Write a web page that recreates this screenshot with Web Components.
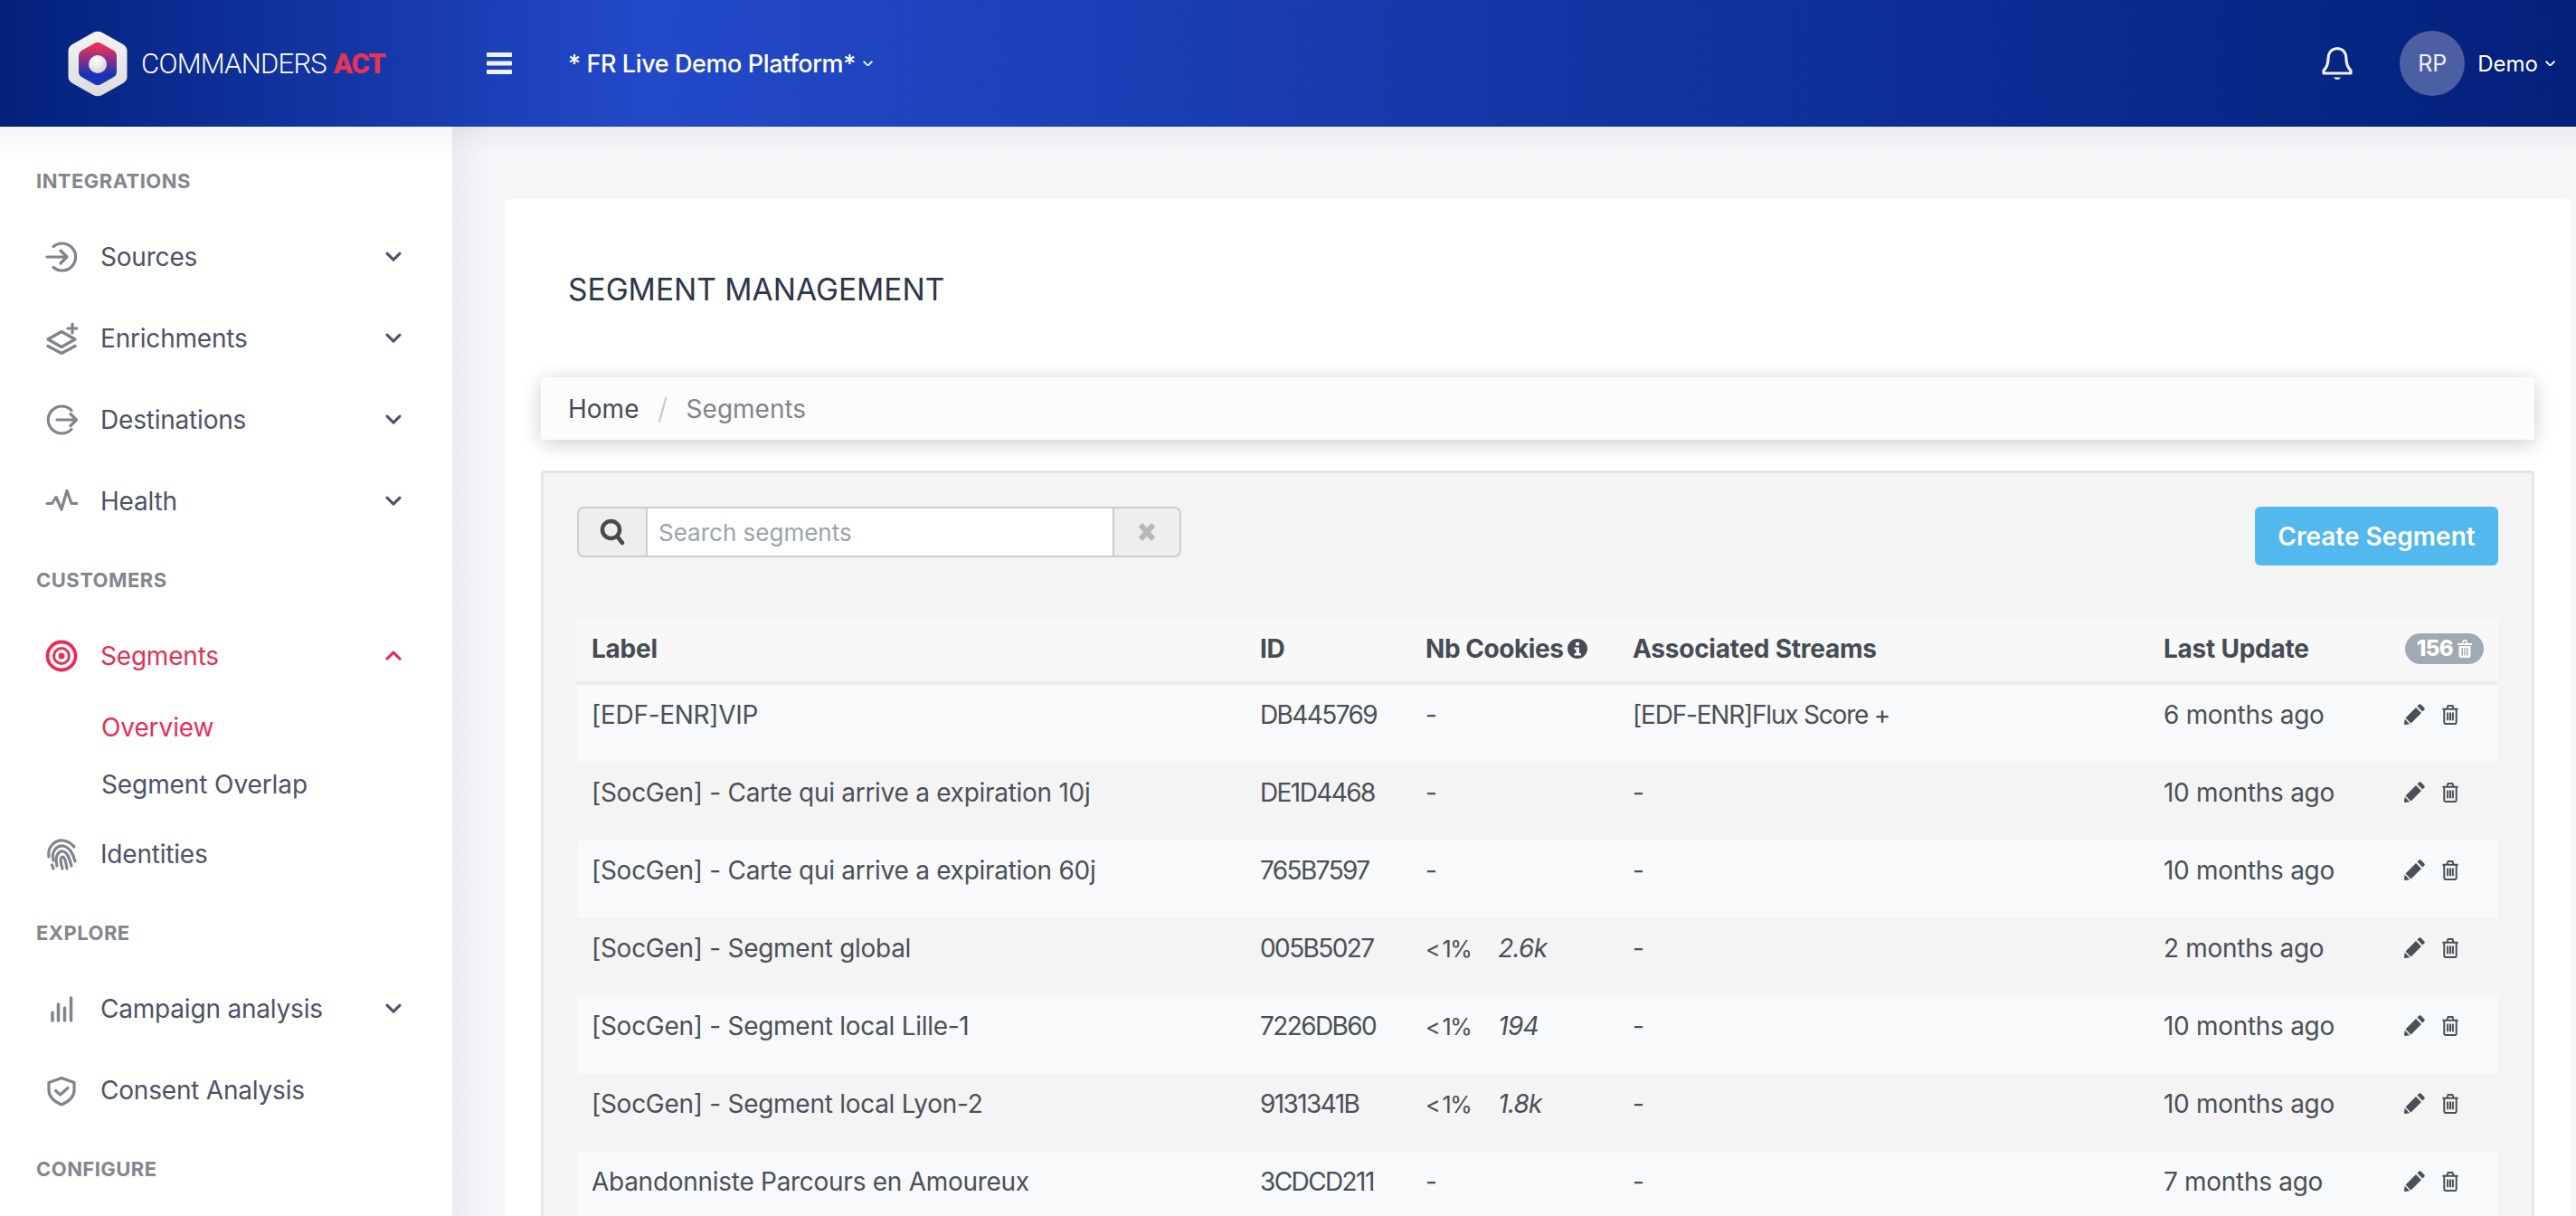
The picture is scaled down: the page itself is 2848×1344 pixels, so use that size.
<!DOCTYPE html>
<html lang="en"><head><meta charset="utf-8"><title>Segment Management</title>
<style>
html,body{margin:0;padding:0;height:1344px;width:2848px;overflow:hidden;background:#f7f7fa;font-family:Inter,"Noto Sans",sans-serif;color:#4a5058}
</style></head><body>
<app-shell>
  <top-bar slot="top" platform="* FR Live Demo Platform*" user="Demo" initials="RP"></top-bar>
  <side-nav slot="side">
    <nav-section>INTEGRATIONS</nav-section>
    <nav-item icon="sources" chevron="down">Sources</nav-item>
    <nav-item icon="enrich" chevron="down">Enrichments</nav-item>
    <nav-item icon="dest" chevron="down">Destinations</nav-item>
    <nav-item icon="health" chevron="down">Health</nav-item>
    <nav-section>CUSTOMERS</nav-section>
    <nav-item icon="target" chevron="up" active>Segments</nav-item>
    <nav-sub active>Overview</nav-sub>
    <nav-sub>Segment Overlap</nav-sub>
    <nav-item icon="finger">Identities</nav-item>
    <nav-section>EXPLORE</nav-section>
    <nav-item icon="bars" chevron="down">Campaign analysis</nav-item>
    <nav-item icon="shield">Consent Analysis</nav-item>
    <nav-section>CONFIGURE</nav-section>
  </side-nav>
  <page-card title-text="SEGMENT MANAGEMENT">
    <bread-crumb slot="crumb" current="Segments">Home</bread-crumb>
    <seg-panel>
      <seg-toolbar placeholder="Search segments" action="Create Segment"></seg-toolbar>
      <seg-head count="156"></seg-head>
      <seg-row label="[EDF-ENR]VIP" uid="DB445769" stream="[EDF-ENR]Flux Score +" updated="6 months ago" striped></seg-row>
      <seg-row label="[SocGen] - Carte qui arrive a expiration 10j" uid="DE1D4468" updated="10 months ago"></seg-row>
      <seg-row label="[SocGen] - Carte qui arrive a expiration 60j" uid="765B7597" updated="10 months ago" striped></seg-row>
      <seg-row label="[SocGen] - Segment global" uid="005B5027" pct="&lt; 1%" cookies="2.6k" updated="2 months ago"></seg-row>
      <seg-row label="[SocGen] - Segment local Lille-1" uid="7226DB60" pct="&lt; 1%" cookies="194" updated="10 months ago" striped></seg-row>
      <seg-row label="[SocGen] - Segment local Lyon-2" uid="9131341B" pct="&lt; 1%" cookies="1.8k" updated="10 months ago"></seg-row>
      <seg-row label="Abandonniste Parcours en Amoureux" uid="3CDCD211" updated="7 months ago" striped></seg-row>
    </seg-panel>
  </page-card>
</app-shell>
<script>
const ICONS={
 sources:'<path d="M9 6.5A15 15 0 1 1 9 29.5"/><path d="M2 18H24M17 11l7 7-7 7"/>',
 dest:'<path d="M29 7.5A15 15 0 1 0 29 28.5"/><path d="M13 18H34M28 11.5l6.5 6.500-6.500 6.500"/>',
 enrich:'<path d="M18 10.500L33 19 18 27.500 3 19Z"/><path d="M3 26.500L18 34.500 33 26.500"/><path d="M30 2v10M25 7h10"/>',
 health:'<path d="M2 20.500H7.500L12 13.500 18 27 24 6.500 29 20.500H35"/>',
 target:'<circle cx="18" cy="18" r="15.500" stroke-width="3.800"/><circle cx="18" cy="18" r="8.500" stroke-width="3"/><circle cx="18" cy="18" r="3.500" fill="currentColor" stroke="none"/>',
 finger:'<path d="M4 21C2 10 11 2 20 3 25 4 29 6 32 10"/><path d="M9 25C6 14 14 8 20 9 26 10 31 17 33 26"/><path d="M13 31C10 20 15 14 20 15 25 16 27 24 29 31"/><path d="M19 34C17 28 16 22 19 21 22 21 23 28 24 34"/><path d="M9 34L7.500 30"/>',
 bars:'<path stroke-width="3.500" d="M8 31V22M14.500 31V13M21.500 31V17M28.500 31V6"/>',
 shield:'<path d="M18 4.500L32 9.500V18C32 26 26 30.500 18 34 10 30.500 4 26 4 18V9.500Z"/><path d="M11.500 18.500l5 4.500 8.500-7.500"/>'
};
function def(name,css,html){
 customElements.define(name,class extends HTMLElement{
  connectedCallback(){
   if(this.shadowRoot)return;
   const r=this.attachShadow({mode:'open'});
   r.innerHTML='<style>'+css+'</style>'+(typeof html==='function'?html(this):html);
  }
 });
}
const chev=(dir,c,w)=>`<svg width="${w||18}" height="${(w||18)*.62}" viewBox="0 0 18 11" fill="none" stroke="${c}" stroke-width="3" stroke-linecap="round" stroke-linejoin="round"><path d="${dir==='up'?'M2 9l7-7 7 7':'M2 2l7 7 7-7'}"/></svg>`;
def('app-shell',`:host{display:grid;grid-template-columns:500px 1fr;grid-template-rows:140px 1fr;height:1344px;width:2848px;overflow:hidden}
 .top{grid-column:1/3;position:relative;z-index:3}
 .side{position:relative;z-index:2;overflow:hidden}
 .main{padding:80px 6px 0 58px;background:linear-gradient(90deg,rgba(30,30,70,.055),rgba(30,30,70,0) 45px),linear-gradient(rgba(30,30,70,.055),rgba(30,30,70,0) 30px),#f7f7fa;overflow:hidden}`,
 `<div class="top"><slot name="top"></slot></div><div class="side"><slot name="side"></slot></div><div class="main"><slot></slot></div>`);
def('top-bar',`:host{display:flex;align-items:center;height:140px;background:linear-gradient(90deg,#03207a 0,#2249c9 25%,#03207a 100%);color:#fff}
 .logo{display:flex;align-items:center;margin-left:75px;width:463px}
 .word{font:300 31px Roboto,sans-serif;margin-left:15px;letter-spacing:-.75px;white-space:nowrap}
 .word b{font-weight:900;color:#e83256;letter-spacing:-1.1px;margin-left:1px}
 .plat{display:flex;align-items:center;gap:8px;margin-left:62px;font-size:27px;font-weight:500;white-space:nowrap;letter-spacing:-.4px}
 .sp{flex:1}.bell{margin-right:52px;display:flex}
 .av{width:72px;height:72px;border-radius:50%;background:#4d5fa3;display:flex;align-items:center;justify-content:center;font-size:25px;color:#eef}
 .user{margin:0 23px 0 14px;display:flex;align-items:center;gap:8px;font-size:24px;}`,
 t=>`<div class="logo"><svg width="66" height="73" viewBox="0 0 66 73" style="flex:none">
 <defs><linearGradient id="g1" x1="0" y1="0" x2="0" y2="1"><stop offset="0" stop-color="#f4f4f4"/><stop offset="1" stop-color="#dcdcdc"/></linearGradient>
 <linearGradient id="g2" x1="0" y1="0" x2="0" y2="1"><stop offset=".1" stop-color="#e8305a"/><stop offset=".75" stop-color="#1a32b8"/></linearGradient>
 <radialGradient id="g3" cx=".4" cy=".3" r=".8"><stop offset="0" stop-color="#fff"/><stop offset="1" stop-color="#cfcfcf"/></radialGradient></defs>
 <path d="M28 2Q33-.5 38 2L61 15Q65.500 18 65.500 22V51Q65.500 55 61 58L38 71Q33 73.500 28 71L5 58Q.5 55 .5 51V22Q.5 18 5 15Z" fill="url(#g1)"/>
 <path d="M30 13.500Q33 12 36 13.500L51 22Q54 24 54 27V46Q54 49 51 51L36 59.500Q33 61 30 59.500L15 51Q12 49 12 46V27Q12 24 15 22Z" fill="url(#g2)"/>
 <circle cx="33" cy="37" r="10" fill="url(#g3)"/></svg>
 <span class="word">COMMANDERS <b>ACT</b></span></div>
 <svg width="28" height="24" viewBox="0 0 28 24" fill="#eef1fb" style="flex:none"><rect width="28" height="5" rx="1"/><rect y="9.500" width="28" height="5" rx="1"/><rect y="19" width="28" height="5" rx="1"/></svg>
 <div class="plat"><span>${t.getAttribute('platform')}</span>${chev('down','#eef1fb',11)}</div>
 <div class="sp"></div>
 <div class="bell"><svg width="34" height="38" viewBox="0 0 34 38" fill="none" stroke="#eef1fb" stroke-width="3.200" stroke-linejoin="round"><path d="M17 2.500C10 3 7 8 7 14C7 21 5 24 2 27V30H32V27C29 24 27 21 27 14C27 8 24 3 17 2.500Z"/><path d="M13 34.500H21Q19.500 37 17 37T13 34.500Z" fill="#eef1fb" stroke="none"/></svg></div>
 <div class="av">${t.getAttribute('initials')}</div>
 <div class="user"><span>${t.getAttribute('user')}</span>${chev('down','#fff',11)}</div>`);
def('side-nav',`:host{display:block;height:1204px;background:linear-gradient(#f4f6f6,#fff 36px);padding-top:38px;box-sizing:border-box}`,`<slot></slot>`);
def('nav-section',`:host{display:block;height:44px;line-height:44px;padding-left:40px;margin:20px 0 17px;font-size:22px;font-weight:700;color:#82878f;letter-spacing:.45px}:host(:first-child){margin-top:0}`,`<slot></slot>`);
def('nav-item',`:host{display:flex;align-items:center;height:90px;padding-left:50px;font-size:28px;color:#4c5368;letter-spacing:-.2px}
 :host([active]){color:#e72f55}
 svg.i{width:36px;height:36px;flex:none;color:#7f848d;margin-right:25px}
 :host([active]) svg.i{color:#e72f55}
 .t{flex:1;white-space:nowrap}.c{margin-right:56px;display:flex}`,
 t=>`<svg class="i" viewBox="0 0 36 36" fill="none" stroke="currentColor" stroke-width="3.200" stroke-linecap="round" stroke-linejoin="round">${ICONS[t.getAttribute('icon')]}</svg><span class="t"><slot></slot></span>${t.hasAttribute('chevron')?`<span class="c">${chev(t.getAttribute('chevron'),t.hasAttribute('active')?'#e72f55':'#4c5368')}</span>`:''}`);
def('nav-sub',`:host{display:flex;align-items:center;height:63.500px;padding-left:112px;font-size:28px;color:#4c5368;white-space:nowrap;letter-spacing:-.1px}
 :host([active]){color:#e72f55;margin-top:2px}`,`<slot></slot>`);
def('page-card',`:host{display:block;background:#fff;height:1200px;padding:73px 40px 0;box-sizing:border-box;border-radius:6px 6px 0 0}
 h1{margin:0 0 70px 30px;font-size:33.500px;line-height:54px;font-weight:400;color:#2d3748;white-space:nowrap}
 .crumb{margin-bottom:34px}`,
 t=>`<h1>${t.getAttribute('title-text')}</h1><div class="crumb"><slot name="crumb"></slot></div><slot></slot>`);
def('bread-crumb',`:host{display:flex;align-items:center;height:69px;padding:0 30px;background:#fcfcfc;box-shadow:0 4px 22px rgba(0,0,0,.2);border-radius:3px;font-size:28px;color:#444b55}
 .s{color:#c8c8c8;margin:0 20.500px;font-weight:300;font-size:32px}.c{color:#80848a}`,
 t=>`<span><slot></slot></span><span class="s">/</span><span class="c">${t.getAttribute('current')}</span>`);
def('seg-panel',`:host{display:block;background:#f4f4f4;border:3px solid #e6e6e6;border-bottom:0;border-radius:4px;padding:37px 37px 0;box-sizing:border-box;height:900px}`,`<slot></slot>`);
def('seg-toolbar',`:host{display:flex;justify-content:space-between;align-items:flex-start;height:123px}
 .s{display:flex;width:668px;height:56px;box-sizing:border-box;border:2px solid #cdcdcd;border-radius:7px;overflow:hidden;background:#eee}
 .a{width:74px;display:flex;align-items:center;justify-content:center;flex:none}
 .a.r{width:72px}
 .f{flex:1;background:#fff;border:solid #cdcdcd;border-width:0 2px;display:flex;align-items:center;padding-left:12px;font-size:26px;color:#9aa3af;white-space:nowrap}
 .b{width:269px;height:65px;background:#52b8ee;border-radius:6px;color:#fff;font-size:28px;font-weight:600;display:flex;align-items:center;justify-content:center;white-space:nowrap}`,
 t=>`<div class="s"><span class="a"><svg width="28" height="30" viewBox="0 0 28 30" fill="none" stroke="#4a4a4a" stroke-width="4.500" stroke-linecap="round"><circle cx="12.500" cy="12.500" r="9.500"/><path d="M19.500 20L25 27"/></svg></span><span class="f">${t.getAttribute('placeholder')}</span><span class="a r"><svg width="20" height="22" viewBox="0 0 20 22" fill="none" stroke="#b8b8b8" stroke-width="6"><path d="M3 3L17 19M17 3L3 19"/></svg></span></div><div class="b">${t.getAttribute('action')}</div>`);
const COLS='grid-template-columns:739px 183px 229px 587px 264px 122px';
const trash=(c)=>`<svg width="20" height="23" viewBox="0 0 20 24" fill="none" stroke="${c}" stroke-width="2.100"><path d="M1 6H19M3 6V21Q3 23 5 23H15Q17 23 17 21V6M6 6L7.500 2H12.500L14 6M7 10V19M10 10V19M13 10V19"/></svg>`;
def('seg-head',`:host{display:grid;${COLS};height:74px;box-sizing:border-box;background:#f8f8f8;border-bottom:4px solid #ececec;font-size:28px;font-weight:700;color:#454c54;align-items:center;white-space:nowrap;letter-spacing:-.25px}
 span{padding-left:16px;padding-bottom:3px;display:flex;align-items:center;gap:3px}
 .nb{letter-spacing:-.45px;gap:5px}
 .bd{margin-left:3px;height:34px;width:87px;box-sizing:border-box;border-radius:17px;background:#a0aab4;color:#fff;font-size:24px;font-weight:800;font-style:normal;display:flex;align-items:center;justify-content:center;gap:5px;padding:0;letter-spacing:-.6px}`,
 t=>`<span>Label</span><span>ID</span><span class="nb">Nb Cookies <svg width="22" height="22" viewBox="0 0 22 22"><circle cx="11" cy="11" r="11" fill="#454c54"/><path d="M9 4h4v3.500H9zM7.500 9.500H13V16h2v2.500H7.500V16h2v-4H7.500z" fill="#f8f8f8"/></svg></span><span>Associated Streams</span><span>Last Update</span><span><i class="bd">${t.getAttribute('count')}<svg width="16" height="20" viewBox="0 0 16 20" fill="#fff"><path d="M0 4H16V6H0zM5 4L6 0H10L11 4H9.500L9 1.500H7L6.500 4z"/><path fill-rule="evenodd" d="M1.500 7H14.500V18Q14.500 20 12.500 20H3.500Q1.500 20 1.500 18ZM4.500 9V17.500H6V9ZM7.300 9V17.500H8.700V9ZM10 9V17.500H11.500V9Z"/></svg></i></span>`);
def('seg-row',`:host{display:grid;${COLS};height:86px;box-sizing:border-box;padding-top:12px;font-size:28px;line-height:42px;color:#4a5058;white-space:nowrap}
 :host([striped]){background:#f8f9fb}
 span{padding-left:16px;overflow:visible}
 .l{letter-spacing:-.28px}
 .id{letter-spacing:-1.6px}
 .st{letter-spacing:-1.200px}
 .u{letter-spacing:-.3px}
 em{font-style:normal;font-size:25px;letter-spacing:-1.500px;word-spacing:-2px}
 i{margin-left:30px;letter-spacing:-.8px;font-size:28px}
 .x{display:flex;gap:18px;padding-top:9px;padding-left:18px;align-items:flex-start}`,
 t=>{const g=a=>t.getAttribute(a);return `<span class="l">${g('label')}</span><span class="id">${g('uid')}</span><span>${g('pct')?'<em>'+g('pct').replace('<','&lt;')+'</em><i>'+g('cookies')+'</i>':'-'}</span><span class="${g('stream')?'st':''}">${g('stream')||'-'}</span><span class="u">${g('updated')}</span><div class="x"><svg width="23" height="23" viewBox="0 0 23 23" fill="#4a5058"><path d="M16.500 0.500Q17.500 -.2 18.500 .6L22.300 4.400Q23.200 5.400 22.400 6.400L20.300 8.500 14.400 2.600ZM13 4L19 10 7.500 21.500 1.500 15.500ZM.7 16.800L6.200 22.300 1 23Q0 23 0 22Z"/></svg>${trash('#4a5058')}</div>`});
</script>
</body></html>
